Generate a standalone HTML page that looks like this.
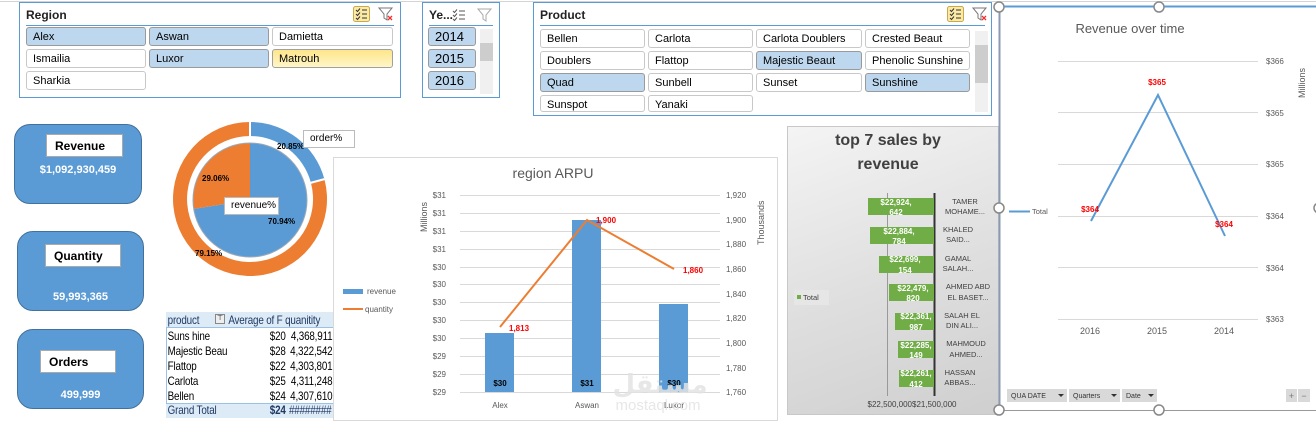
<!DOCTYPE html>
<html><head><meta charset="utf-8"><style>
*{margin:0;padding:0;box-sizing:border-box}
body{width:1316px;height:421px;background:#fff;position:relative;overflow:hidden;font-family:"Liberation Sans",sans-serif;}
.a{position:absolute}
.sl{position:absolute;border:1px solid #5b9bd5;background:#fff}
.sl .t{position:absolute;left:6px;top:5px;font-size:12px;font-weight:bold;color:#222}
.sl .ln{position:absolute;left:6px;right:6px;top:22px;height:1px;background:#5b9bd5}
.b{position:absolute;height:19px;border:1px solid #c8c8c8;border-radius:3px;background:#fff;font-size:11px;line-height:18px;padding-left:6px;color:#000;white-space:nowrap;overflow:hidden}
.b.s{background:#bdd7ee;border-color:#9a9a9a}
.b.y{background:linear-gradient(#fde58a,#fff6c8);border-color:#a0a0a0}
.sb{position:absolute;width:13px;background:#f0f0f0}
.sb i{position:absolute;left:0;width:13px;background:#cdcdcd}
.card{position:absolute;background:#5b9bd5;border:1px solid #41719c;border-radius:16px}
.card .lb{position:absolute;background:#fff;border:1px solid #aaa;font-size:12px;font-weight:bold;padding-left:8px;line-height:22px;height:23px}
.card .v{position:absolute;left:0;right:0;text-align:center;color:#fff;font-size:11px;font-weight:bold}
.pvw{position:absolute;left:166px;top:312px;width:204px;height:106px;transform:scaleX(0.82);transform-origin:0 0}
.pv{position:absolute;font-size:12px;color:#000;letter-spacing:-0.2px}
</style></head><body>
<div class="a" style="left:0;top:0;width:1316px;height:2px;border-bottom:1px solid #d4d4d4"></div>

<svg width="0" height="0" style="position:absolute">
 <defs>
  <g id="ms"><rect x="0.5" y="0.5" width="16" height="15" rx="2" fill="#fbe9a6" stroke="#c9a94a"/><path d="M3,4 l1.5,1.5 l2.5,-3 M3,8 l1.5,1.5 l2.5,-3 M3,12 l1.5,1.5 l2.5,-3" stroke="#333" fill="none"/><path d="M9,4h5M9,8h5M9,12h5" stroke="#333"/></g>
  <g id="fl"><path d="M1,2 h13 l-5,6 v6 l-3,-2 v-4 z" fill="none" stroke="#777"/><path d="M10,10 l4,4 M14,10 l-4,4" stroke="#e33" stroke-width="1.3"/></g>
 </defs>
</svg>

<!-- Region slicer -->
<div class="sl" style="left:19px;top:2px;width:382px;height:96px">
 <div class="t">Region</div><div class="ln"></div>
 <svg class="a" style="left:333px;top:3px" width="18" height="17"><use href="#ms"/></svg>
 <svg class="a" style="left:358px;top:3px" width="16" height="16"><use href="#fl"/></svg>
 <div class="b s" style="left:6px;top:24px;width:120px">Alex</div>
 <div class="b s" style="left:129px;top:24px;width:120px">Aswan</div>
 <div class="b" style="left:252px;top:24px;width:121px">Damietta</div>
 <div class="b" style="left:6px;top:46px;width:120px">Ismailia</div>
 <div class="b s" style="left:129px;top:46px;width:120px">Luxor</div>
 <div class="b y" style="left:252px;top:46px;width:121px">Matrouh</div>
 <div class="b" style="left:6px;top:68px;width:120px">Sharkia</div>
</div>

<!-- Year slicer -->
<div class="sl" style="left:422px;top:2px;width:78px;height:96px">
 <div class="t">Ye...</div><div class="ln"></div>
 <svg class="a" style="left:29px;top:4px" width="16" height="16"><path d="M1,4 l1.5,1.5 l2.5,-3 M1,8 l1.5,1.5 l2.5,-3 M1,12 l1.5,1.5 l2.5,-3" stroke="#555" fill="none"/><path d="M7,4h6M7,8h6M7,12h6" stroke="#555"/></svg>
 <svg class="a" style="left:54px;top:4px" width="16" height="16"><path d="M1,2 h13 l-5,6 v6 l-3,-2 v-4 z" fill="none" stroke="#aaa"/></svg>
 <div class="b s" style="left:5px;top:24px;width:48px;font-size:13px">2014</div>
 <div class="b s" style="left:5px;top:46px;width:48px;font-size:13px">2015</div>
 <div class="b s" style="left:5px;top:68px;width:48px;font-size:13px">2016</div>
 <div class="sb" style="left:57px;top:26px;height:65px"><i style="top:14px;height:18px"></i></div>
</div>

<!-- Product slicer -->
<div class="sl" style="left:533px;top:2px;width:459px;height:114px">
 <div class="t">Product</div><div class="ln"></div>
 <svg class="a" style="left:413px;top:3px" width="18" height="17"><use href="#ms"/></svg>
 <svg class="a" style="left:438px;top:3px" width="16" height="16"><use href="#fl"/></svg>
 <div class="b" style="left:6px;top:26px;width:105px">Bellen</div>
 <div class="b" style="left:114px;top:26px;width:105px">Carlota</div>
 <div class="b" style="left:222px;top:26px;width:106px">Carlota Doublers</div>
 <div class="b" style="left:331px;top:26px;width:105px">Crested Beaut</div>
 <div class="b" style="left:6px;top:48px;width:105px">Doublers</div>
 <div class="b" style="left:114px;top:48px;width:105px">Flattop</div>
 <div class="b s" style="left:222px;top:48px;width:106px">Majestic Beaut</div>
 <div class="b" style="left:331px;top:48px;width:105px">Phenolic Sunshine</div>
 <div class="b s" style="left:6px;top:70px;width:105px">Quad</div>
 <div class="b" style="left:114px;top:70px;width:105px">Sunbell</div>
 <div class="b" style="left:222px;top:70px;width:106px">Sunset</div>
 <div class="b s" style="left:331px;top:70px;width:105px">Sunshine</div>
 <div class="b" style="left:6px;top:92px;width:105px;height:17px">Sunspot</div>
 <div class="b" style="left:114px;top:92px;width:105px;height:17px">Yanaki</div>
 <div class="sb" style="left:441px;top:28px;height:81px"><i style="top:14px;height:38px"></i></div>
</div>

<!-- KPI cards -->
<div class="card" style="left:14px;top:124px;width:128px;height:80px">
 <div class="lb" style="left:31px;top:9px;width:77px">Revenue</div>
 <div class="v" style="top:39px">$1,092,930,459</div></div>
<div class="card" style="left:17px;top:231px;width:127px;height:80px">
 <div class="lb" style="left:27px;top:12px;width:76px">Quantity</div>
 <div class="v" style="top:59px">59,993,365</div></div>
<div class="card" style="left:17px;top:329px;width:127px;height:80px">
 <div class="lb" style="left:22px;top:20px;width:76px">Orders</div>
 <div class="v" style="top:59px">499,999</div></div>

<!-- Donut -->
<svg class="a" style="left:0;top:0" width="1316" height="421">
 <path d="M250,122 A77,77 0 0 1 324.4,179.1 L310.9,182.7 A63,63 0 0 0 250,136 Z" fill="#5b9bd5"/>
 <path d="M324.4,179.1 A77,77 0 1 1 250,122 L250,136 A63,63 0 1 0 310.9,182.7 Z" fill="#ed7d31"/>
 <line x1="250" y1="121" x2="250" y2="137" stroke="#fff" stroke-width="2"/>
 <line x1="324.4" y1="179.1" x2="310" y2="183" stroke="#fff" stroke-width="2"/>
 <path d="M250,200 L250,143 A57,57 0 1 1 193.7,208.9 Z" fill="#5b9bd5"/>
 <path d="M250,200 L193.7,208.9 A57,57 0 0 1 250,143 Z" fill="#ed7d31"/>
 <circle cx="250" cy="200" r="57" fill="none" stroke="#9aa9b8" stroke-width="1"/>
 <g font-size="8" font-weight="bold" fill="#000">
  <text x="277" y="149">20.85%</text><text x="202" y="181">29.06%</text>
  <text x="268" y="224">70.94%</text><text x="195" y="256">79.15%</text>
 </g>
</svg>
<div class="a" style="left:303px;top:130px;width:52px;height:18px;border:1px solid #bbb;background:#fff;font-size:10px;line-height:16px;padding-left:6px">order%</div>
<div class="a" style="left:224px;top:197px;width:55px;height:18px;border:1px solid #bbb;background:#fff;font-size:10px;line-height:16px;padding-left:6px">revenue%</div>

<!-- ARPU chart -->
<div class="a" style="left:333px;top:157px;width:445px;height:264px;border:1px solid #d9d9d9;background:#fff"></div>
<svg class="a" style="left:0;top:0" width="1316" height="421" font-family="Liberation Sans,sans-serif">
 <text x="553" y="178" font-size="14" fill="#595959" text-anchor="middle">region ARPU</text>
 <g stroke="#d9d9d9" stroke-width="1">
  <line x1="460" x2="720" y1="195.5" y2="195.5"/><line x1="460" x2="720" y1="213.5" y2="213.5"/><line x1="460" x2="720" y1="231.5" y2="231.5"/><line x1="460" x2="720" y1="249.5" y2="249.5"/><line x1="460" x2="720" y1="267.5" y2="267.5"/><line x1="460" x2="720" y1="284.5" y2="284.5"/><line x1="460" x2="720" y1="302.5" y2="302.5"/><line x1="460" x2="720" y1="320.5" y2="320.5"/><line x1="460" x2="720" y1="338.5" y2="338.5"/><line x1="460" x2="720" y1="356.5" y2="356.5"/><line x1="460" x2="720" y1="374.5" y2="374.5"/><line x1="460" x2="720" y1="392.5" y2="392.5"/>
 </g>
 <g font-size="8" fill="#595959" text-anchor="end">
  <text x="446" y="198">$31</text><text x="446" y="216">$31</text><text x="446" y="234">$31</text><text x="446" y="252">$31</text><text x="446" y="270">$30</text><text x="446" y="287">$30</text><text x="446" y="305">$30</text><text x="446" y="323">$30</text><text x="446" y="341">$30</text><text x="446" y="359">$29</text><text x="446" y="377">$29</text><text x="446" y="395">$29</text>
 </g>
 <g font-size="8" fill="#595959">
  <text x="726" y="198">1,920</text><text x="726" y="223">1,900</text><text x="726" y="247">1,880</text><text x="726" y="272">1,860</text><text x="726" y="297">1,840</text><text x="726" y="321">1,820</text><text x="726" y="346">1,800</text><text x="726" y="371">1,780</text><text x="726" y="395">1,760</text>
 </g>
 <text transform="translate(427,232) rotate(-90)" font-size="9" fill="#595959">Millions</text>
 <text transform="translate(764,245) rotate(-90)" font-size="9" fill="#595959">Thousands</text>
 <g fill="#5b9bd5"><rect x="485" y="333" width="29" height="59"/><rect x="572" y="220" width="29" height="172"/><rect x="659" y="304" width="29" height="88"/></g>
 <polyline points="500,327 587,220 674,269" fill="none" stroke="#ed7d31" stroke-width="2"/>
 <g font-size="8" font-weight="bold" fill="#f00"><text x="509" y="331">1,813</text><text x="596" y="223">1,900</text><text x="683" y="273">1,860</text></g>
 <g font-size="8" font-weight="bold" fill="#000" text-anchor="middle"><text x="500" y="386">$30</text><text x="587" y="386">$31</text><text x="674" y="386">$30</text></g>
 <g font-size="8" fill="#595959" text-anchor="middle"><text x="500" y="408">Alex</text><text x="587" y="408">Aswan</text><text x="674" y="408">Luxor</text></g>
 <rect x="343" y="289" width="20" height="5" fill="#5b9bd5"/><text x="367" y="294" font-size="8" fill="#595959">revenue</text>
 <line x1="343" x2="363" y1="309" y2="309" stroke="#ed7d31" stroke-width="2"/><text x="365" y="312" font-size="8" fill="#595959">quantity</text>
 <text x="660" y="393" font-size="26" font-weight="bold" fill="#e3e3e3" text-anchor="middle" opacity="0.85" font-family="Noto Sans CJK SC,DejaVu Sans,sans-serif">مستقل</text>
 <text x="658" y="410" font-size="15" fill="#e3e3e3" text-anchor="middle" opacity="0.85">mostaql.com</text>
</svg>

<!-- Pivot table -->
<div class="a" style="left:166px;top:312px;width:167px;height:16px;background:#ddebf7;border-bottom:1px solid #9bc2e6"></div>
<div class="a" style="left:166px;top:328px;width:1px;height:75px;background:#9bc2e6"></div>
<div class="a" style="left:166px;top:403px;width:167px;height:15px;background:#ddebf7;border-top:1px solid #9bc2e6"></div>
<div class="a" style="left:215px;top:314px;width:10px;height:10px;border:1px solid #888;background:#eee;font-size:7px;line-height:8px;text-align:center">⊤</div>
<div class="pvw">
 <div class="pv" style="left:2px;top:1px;color:#1f3864">product</div>
 <div class="pv" style="left:76px;top:1px;color:#1f3864">Average of F quanitity</div>
 <div class="pv" style="left:2px;top:17px;line-height:15px">Suns hine<br>Majestic Beau<br>Flattop<br>Carlota<br>Bellen</div>
 <div class="pv" style="left:124px;top:17px;line-height:15px;text-align:right;width:22px">$20<br>$28<br>$22<br>$25<br>$24</div>
 <div class="pv" style="left:148px;top:17px;line-height:15px;width:55px;text-align:right">4,368,911<br>4,322,542<br>4,303,801<br>4,311,248<br>4,307,610</div>
 <div class="pv" style="left:2px;top:91px;color:#1f3864">Grand Total</div>
 <div class="pv" style="left:124px;top:91px;width:22px;text-align:right;font-weight:bold;color:#1f3864">$24</div>
 <div class="pv" style="left:150px;top:91px;color:#1f3864">########</div>
</div>

<!-- Top 7 chart -->
<div class="a" style="left:787px;top:126px;width:212px;height:289px;background:linear-gradient(160deg,#f4f4f4,#dedede 55%,#cfcfcf);border:1px solid #c8c8c8"></div>
<svg class="a" style="left:0;top:0" width="1316" height="421" font-family="Liberation Sans,sans-serif">
 <text x="888" y="145" font-size="16" font-weight="bold" fill="#404040" text-anchor="middle">top 7 sales by</text>
 <text x="888" y="169" font-size="16" font-weight="bold" fill="#404040" text-anchor="middle">revenue</text>
 <line x1="887.5" y1="193" x2="887.5" y2="396" stroke="#999"/>
 <line x1="934.5" y1="193" x2="934.5" y2="396" stroke="#333" stroke-width="2"/>
 <g fill="#70ad47">
  <rect x="868" y="198" width="66" height="17"/><rect x="870" y="227" width="64" height="17"/><rect x="879" y="256" width="55" height="17"/><rect x="889" y="284" width="45" height="17"/><rect x="895" y="313" width="39" height="17"/><rect x="898" y="341" width="36" height="17"/><rect x="899" y="370" width="35" height="17"/>
 </g>
 <g font-size="8" font-weight="bold" fill="#fff" text-anchor="middle">
  <text x="896" y="205">$22,924,</text><text x="896" y="215">642</text>
  <text x="899" y="234">$22,884,</text><text x="899" y="244">784</text>
  <text x="905" y="262">$22,699,</text><text x="905" y="273">154</text>
  <text x="913" y="291">$22,479,</text><text x="913" y="301">820</text>
  <text x="916" y="319">$22,361,</text><text x="916" y="330">987</text>
  <text x="916" y="348">$22,285,</text><text x="916" y="358">149</text>
  <text x="916" y="376">$22,261,</text><text x="916" y="387">412</text>
 </g>
 <g font-size="7.5" fill="#404040" text-anchor="middle">
  <text x="965" y="204">TAMER</text><text x="965" y="214">MOHAME...</text>
  <text x="958" y="232">KHALED</text><text x="958" y="242">SAID...</text>
  <text x="958" y="261">GAMAL</text><text x="958" y="271">SALAH...</text>
  <text x="968" y="289">AHMED ABD</text><text x="968" y="300">EL BASET...</text>
  <text x="962" y="318">SALAH EL</text><text x="962" y="328">DIN ALI...</text>
  <text x="966" y="346">MAHMOUD</text><text x="966" y="357">AHMED...</text>
  <text x="960" y="375">HASSAN</text><text x="960" y="385">ABBAS...</text>
 </g>
 <rect x="794" y="290" width="35" height="15" fill="#e6e6e6"/>
 <rect x="797" y="295" width="4" height="4" fill="#70ad47"/><text x="803" y="300" font-size="7.5" fill="#404040">Total</text>
 <text x="912" y="407" font-size="8" fill="#404040" text-anchor="middle">$22,500,000$21,500,000</text>
</svg>

<!-- Revenue over time -->
<svg class="a" style="left:0;top:0" width="1316" height="421" font-family="Liberation Sans,sans-serif">
 <rect x="999" y="6" width="320" height="404" fill="#fff"/>
 <line x1="999" y1="6.5" x2="1316" y2="6.5" stroke="#5b9bd5" stroke-width="2"/>
 <line x1="999.5" y1="6" x2="999.5" y2="410" stroke="#8a9bb0" stroke-width="2"/>
 <line x1="999" y1="410.5" x2="1316" y2="410.5" stroke="#999"/>
 <text x="1130" y="33" font-size="13" fill="#595959" text-anchor="middle">Revenue over time</text>
 <g stroke="#d9d9d9"><line x1="1058" x2="1258" y1="61.5" y2="61.5"/><line x1="1058" x2="1258" y1="112.5" y2="112.5"/><line x1="1058" x2="1258" y1="164.5" y2="164.5"/><line x1="1058" x2="1258" y1="216.5" y2="216.5"/><line x1="1058" x2="1258" y1="267.5" y2="267.5"/><line x1="1058" x2="1258" y1="319.5" y2="319.5"/></g>
 <g font-size="8" fill="#595959"><text x="1266" y="64">$366</text><text x="1266" y="116">$365</text><text x="1266" y="167">$365</text><text x="1266" y="219">$364</text><text x="1266" y="271">$364</text><text x="1266" y="322">$363</text></g>
 <text transform="translate(1305,98) rotate(-90)" font-size="9" fill="#595959">Millions</text>
 <polyline points="1091,221 1158,95 1225,236" fill="none" stroke="#5b9bd5" stroke-width="2"/>
 <g font-size="8" font-weight="bold" fill="#f00" text-anchor="middle"><text x="1090" y="212">$364</text><text x="1157" y="85">$365</text><text x="1224" y="227">$364</text></g>
 <g font-size="9" fill="#595959" text-anchor="middle"><text x="1090" y="334">2016</text><text x="1157" y="334">2015</text><text x="1224" y="334">2014</text></g>
 <line x1="1009" x2="1030" y1="211.5" y2="211.5" stroke="#5b9bd5" stroke-width="2"/><text x="1032" y="214" font-size="7.5" fill="#595959">Total</text>
 <rect x="1007" y="389" width="60" height="13" fill="#d9d9d9"/><text x="1011" y="398" font-size="7" fill="#333">QUA DATE</text><path d="M1058,394 h6 l-3,3 z" fill="#333"/>
 <rect x="1069" y="389" width="51" height="13" fill="#d9d9d9"/><text x="1073" y="398" font-size="7" fill="#333">Quarters</text><path d="M1111,394 h6 l-3,3 z" fill="#333"/>
 <rect x="1122" y="389" width="35" height="13" fill="#d9d9d9"/><text x="1126" y="398" font-size="7" fill="#333">Date</text><path d="M1148,394 h6 l-3,3 z" fill="#333"/>
 <rect x="1286" y="389" width="11" height="13" fill="#d9d9d9"/><text x="1291.5" y="399" font-size="9" fill="#777" text-anchor="middle">+</text>
 <rect x="1298" y="389" width="12" height="13" fill="#d9d9d9"/><text x="1304" y="399" font-size="9" fill="#777" text-anchor="middle">−</text>
 <g fill="#fff" stroke="#888" stroke-width="1.5">
  <circle cx="999" cy="7" r="5"/><circle cx="1159" cy="7" r="5"/><circle cx="999" cy="208" r="5"/><circle cx="999" cy="410" r="5"/><circle cx="1159" cy="410" r="5"/><circle cx="1319" cy="208" r="5"/>
 </g>
</svg>
</body></html>
